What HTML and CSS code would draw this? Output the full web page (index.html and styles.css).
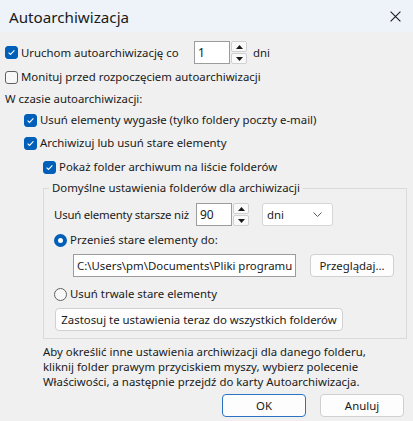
FILE: index.html
```html
<!DOCTYPE html>
<html lang="pl">
<head>
<meta charset="utf-8">
<title>Autoarchiwizacja</title>
<link rel="stylesheet" href="styles.css">
</head>
<body>
<div class="window">
  <div class="titlebar">
    <span class="title">Autoarchiwizacja</span>
    <svg class="close" width="11" height="11" viewBox="0 0 11 11"><path d="M0.6 0.6L10.4 10.4M10.4 0.6L0.6 10.4" stroke="#1a1a1a" stroke-width="1.1" fill="none"/></svg>
  </div>
  <div class="content">
    <div class="row r-spin">
      <label class="opt lbl-run"><span class="cb on"><svg width="9" height="9" viewBox="0 0 9 9"><path d="M1.6 4.7L3.5 6.5L7.4 2.4" stroke="#fff" stroke-width="1.1" fill="none"/></svg></span><span>Uruchom autoarchiwizację co</span></label>
      <div class="spin">
        <span class="num">1</span>
        <span class="arrows">
          <span class="arrow"><svg width="7" height="4" viewBox="0 0 7 4"><path d="M0 4L3.5 0L7 4Z" fill="#1a1a1a"/></svg></span>
          <span class="arrow"><svg width="7" height="4" viewBox="0 0 7 4"><path d="M0 0L3.5 4L7 0Z" fill="#1a1a1a"/></svg></span>
        </span>
      </div>
      <span class="unit">dni</span>
    </div>

    <div class="row r-line mt4">
      <label class="opt"><span class="cb"></span><span>Monituj przed rozpoczęciem autoarchiwizacji</span></label>
    </div>

    <div class="row r-line mt6">
      <span>W czasie autoarchiwizacji:</span>
    </div>

    <div class="row r-line mt4 ind1">
      <label class="opt"><span class="cb on"><svg width="9" height="9" viewBox="0 0 9 9"><path d="M1.6 4.7L3.5 6.5L7.4 2.4" stroke="#fff" stroke-width="1.1" fill="none"/></svg></span><span>Usuń elementy wygasłe (tylko foldery poczty e-mail)</span></label>
    </div>

    <div class="row r-line mt7 ind1">
      <label class="opt"><span class="cb on"><svg width="9" height="9" viewBox="0 0 9 9"><path d="M1.6 4.7L3.5 6.5L7.4 2.4" stroke="#fff" stroke-width="1.1" fill="none"/></svg></span><span>Archiwizuj lub usuń stare elementy</span></label>
    </div>

    <div class="row r-line mt8 ind2">
      <label class="opt"><span class="cb on"><svg width="9" height="9" viewBox="0 0 9 9"><path d="M1.6 4.7L3.5 6.5L7.4 2.4" stroke="#fff" stroke-width="1.1" fill="none"/></svg></span><span>Pokaż folder archiwum na liście folderów</span></label>
    </div>

    <fieldset class="group">
      <legend>Domyślne ustawienia folderów dla archiwizacji</legend>

      <div class="row r-spin g-first">
        <span class="lbl-older">Usuń elementy starsze niż</span>
        <div class="spin">
          <span class="num">90</span>
          <span class="arrows">
            <span class="arrow"><svg width="7" height="4" viewBox="0 0 7 4"><path d="M0 4L3.5 0L7 4Z" fill="#1a1a1a"/></svg></span>
            <span class="arrow"><svg width="7" height="4" viewBox="0 0 7 4"><path d="M0 0L3.5 4L7 0Z" fill="#1a1a1a"/></svg></span>
          </span>
        </div>
        <div class="select"><span>dni</span><svg width="9" height="5" viewBox="0 0 9 5"><path d="M0.5 0.5L4.5 4.5L8.5 0.5" stroke="#5a5a5a" stroke-width="1" fill="none"/></svg></div>
      </div>

      <div class="row r-line mt6">
        <label class="opt"><span class="radio on"></span><span>Przenieś stare elementy do:</span></label>
      </div>

      <div class="row r-spin mt6">
        <span class="path">C:\Users\pm\Documents\Pliki programu</span>
        <span class="btn browse">Przeglądaj...</span>
      </div>

      <div class="row r-line mt9">
        <label class="opt"><span class="radio"></span><span>Usuń trwale stare elementy</span></label>
      </div>

      <div class="row mt6">
        <span class="btn apply">Zastosuj te ustawienia teraz do wszystkich folderów</span>
      </div>
    </fieldset>

    <p class="note">Aby określić inne ustawienia archiwizacji dla danego folderu,<br>kliknij folder prawym przyciskiem myszy, wybierz polecenie<br>Właściwości, a następnie przejdź do karty Autoarchiwizacja.</p>

    <div class="actions">
      <span class="btn dlg default">OK</span>
      <span class="btn dlg">Anuluj</span>
    </div>
  </div>
</div>
</body>
</html>
```

FILE: styles.css
```css
* { box-sizing: border-box; }

body {
  margin: 0;
  background: #f0f0f0;
  font-family: "Segoe UI", "Noto Sans", sans-serif;
  font-size: 11.4px;
  color: #1a1a1a;
}

.window {
  width: 413px;
  height: 421px;
  display: flex;
  flex-direction: column;
  overflow: hidden;
}

.titlebar {
  height: 32px;
  flex: none;
  background: #eef3f9;
  display: flex;
  align-items: center;
  justify-content: space-between;
  padding: 1px 12px 0 9px;
}

.title {
  font-size: 15.2px;
  color: #1a1a1a;
}

.content {
  padding: 9px 0 0 5px;
  display: flex;
  flex-direction: column;
}

.row {
  display: flex;
  align-items: center;
  line-height: 16px;
  white-space: nowrap;
}

.r-spin { height: 23px; }
.r-line { height: 16px; }

.mt4 { margin-top: 5px; }
.mt6 { margin-top: 6px; }
.mt7 { margin-top: 7px; }
.mt8 { margin-top: 8px; }
.mt9 { margin-top: 9px; }

.ind1 { padding-left: 19px; }
.ind2 { padding-left: 38px; }

.opt {
  display: flex;
  align-items: center;
  gap: 3px;
}

.cb {
  width: 13px;
  height: 13px;
  flex: none;
  border: 1px solid #616161;
  border-radius: 3px;
  background: #f8f8f8;
  display: flex;
  align-items: center;
  justify-content: center;
}

.cb.on {
  background: #005fb8;
  border-color: #005fb8;
}

.radio {
  width: 13px;
  height: 13px;
  flex: none;
  border-radius: 50%;
  border: 1px solid #616161;
  background: #f8f8f8;
}

.radio.on {
  border: 4px solid #005fb8;
  background: #fff;
}

.lbl-run { width: 189px; flex: none; }
.lbl-older { width: 142px; flex: none; letter-spacing: -0.2px; }

.spin {
  display: flex;
  align-items: stretch;
  height: 23px;
  flex: none;
}

.num {
  width: 36px;
  height: 23px;
  background: #fff;
  border: 1px solid #9c9c9c;
  padding: 2px 0 0 3px;
  line-height: 17px;
  font-size: 12px;
}

.arrows {
  display: flex;
  flex-direction: column;
  gap: 1px;
  margin-left: 1px;
  width: 16px;
}

.arrow {
  flex: 1;
  border: 1px solid #d0d0d0;
  border-radius: 2px;
  background: #f9f9f9;
  display: flex;
  align-items: center;
  justify-content: center;
}

.unit { margin-left: 6px; }

.group {
  margin: 5px 0 0 38px;
  width: 364px;
  padding: 0 0 7px 10px;
  border: 1px solid #dadada;
  display: flex;
  flex-direction: column;
  min-width: 0;
}

.group legend {
  padding: 0 3px;
  margin-left: -5px;
  line-height: 16px;
}

.g-first { margin-top: 7px; }

.select {
  margin-left: 13px;
  width: 71px;
  height: 23px;
  flex: none;
  background: #fff;
  border: 1px solid #d6d6d6;
  border-radius: 3px;
  display: flex;
  align-items: center;
  justify-content: space-between;
  padding: 0 10px 0 4px;
}

.path {
  margin-left: 19px;
  width: 223px;
  height: 23px;
  flex: none;
  background: #fff;
  border: 1px solid #9c9c9c;
  padding: 0 0 0 3px;
  line-height: 21px;
  white-space: nowrap;
  overflow: hidden;
}

.btn {
  height: 23px;
  background: #fdfdfd;
  border: 1px solid #d0d0d0;
  border-radius: 4px;
  display: flex;
  align-items: center;
  justify-content: center;
  white-space: nowrap;
  flex: none;
}

.browse {
  margin-left: 14px;
  width: 84px;
}

.apply {
  margin-left: 1px;
  width: 288px;
  height: 23px;
}

.note {
  margin: 5px 0 0 38px;
  line-height: 15px;
}

.actions {
  margin-top: 5px;
  display: flex;
  justify-content: flex-end;
  gap: 14px;
  padding-right: 9px;
}

.dlg { width: 84px; }

.dlg.default { border-color: #2a72c2; }
```
